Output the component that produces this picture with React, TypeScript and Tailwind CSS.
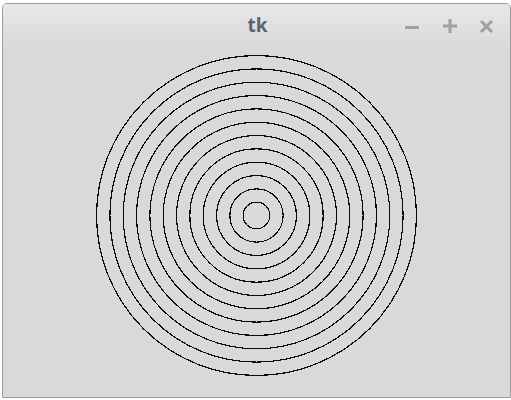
import React from 'react';

const RINGS = Array.from({ length: 12 }, (_, i) => (i + 1) * 13.33);

const App: React.FC = () => {
  return (
    <div className="w-[511px] h-[400px] bg-white pt-[3px] pl-[2px] pb-[2px]" style={{ fontFamily: '"Noto Sans", "DejaVu Sans", sans-serif' }}>
      <div className="w-[509px] h-[395px] border border-[#9c9c9c] rounded-t-[5px] bg-[#d9d9d9] flex flex-col overflow-hidden">
        <div className="h-[44px] shrink-0 flex items-center relative bg-gradient-to-b from-[#e8e8e8] to-[#d9d9d9]">
          <span className="flex-1 text-center text-[19px] leading-none font-bold text-[#5b6470] pl-[2px] pb-[1px]">tk</span>
          <div className="absolute left-[402px] top-[15px] flex items-center gap-[24px] text-[#a0a0a0]">
            <svg width="14" height="14" viewBox="0 0 14 14">
              <path d="M0 8.5h14" stroke="currentColor" strokeWidth="3" />
            </svg>
            <svg width="14" height="14" viewBox="0 0 14 14">
              <path d="M0 7h14M7 0v14" stroke="currentColor" strokeWidth="3" />
            </svg>
            <svg width="13" height="13" viewBox="0 0 13 13" className="ml-[-1px]">
              <path d="M1 1l11 11M12 1L1 12" stroke="currentColor" strokeWidth="3" />
            </svg>
          </div>
        </div>
        <div className="flex-1">
          <svg width="507" height="348" viewBox="3 48 507 348" shapeRendering="crispEdges">
            {RINGS.map((r) => (
              <circle key={r} cx={256.5} cy={215.5} r={r} fill="none" stroke="#0a0a0a" strokeWidth={1.2} />
            ))}
          </svg>
        </div>
      </div>
    </div>
  );
};

export default App;
